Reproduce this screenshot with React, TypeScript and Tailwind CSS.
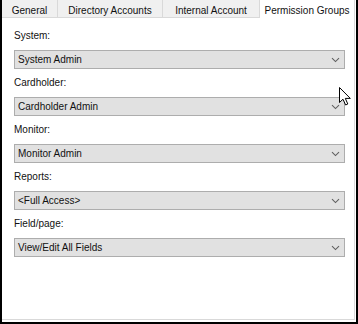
import React from 'react';

const groups = [
  { label: 'System:', value: 'System Admin' },
  { label: 'Cardholder:', value: 'Cardholder Admin' },
  { label: 'Monitor:', value: 'Monitor Admin' },
  { label: 'Reports:', value: '<Full Access>' },
  { label: 'Field/page:', value: 'View/Edit All Fields' },
];

const tabs = [
  { name: 'General', w: 'w-[56px]' },
  { name: 'Directory Accounts', w: 'w-[105px]' },
  { name: 'Internal Account', w: 'w-[97px]' },
];

const Chevron = () => (
  <svg width="9" height="6" viewBox="0 0 9 6" className="text-[#606060]">
    <path d="M1 1.2 L4.5 4.6 L8 1.2" fill="none" stroke="currentColor" strokeWidth="1.1" />
  </svg>
);

const Select = ({ value }: { value: string }) => (
  <div className="h-[19px] w-[331px] flex items-center justify-between bg-[#e1e1e1] border border-[#adadad] pl-[3px] pr-[4px]">
    <span className="leading-none">{value}</span>
    <Chevron />
  </div>
);

const Cursor = () => (
  <svg width="13" height="19" viewBox="0 0 13 19" className="absolute left-[337px] top-[87px]">
    <path
      d="M0.5 0.5 L0.5 15.5 L4 12.2 L6.6 18 L8.8 17 L6.3 11.4 L11.3 11.4 Z"
      fill="#ffffff"
      stroke="#000000"
      strokeWidth="1"
      strokeLinejoin="round"
    />
  </svg>
);

const App = () => {
  return (
    <div
      className="relative w-[358px] h-[324px] bg-white border-l-2 border-r-2 border-b-2 border-black flex flex-col text-[10px] text-[#111]"
      style={{ fontFamily: '"Liberation Sans", Arial, sans-serif' }}
    >
      <div className="flex h-[18px] shrink-0">
        {tabs.map((t) => (
          <div
            key={t.name}
            className={`${t.w} h-[18px] mt-0 bg-[#f0f0f0] border-r border-b border-[#d9d9d9] flex items-center justify-center pt-[3px]`}
          >
            {t.name}
          </div>
        ))}
        <div className="flex-1 h-[18px] bg-white flex items-start justify-center pt-[3px] border-r border-[#d9d9d9]">
          Permission Groups
        </div>
        <div className="w-[1px]" />
      </div>
      <div className="flex-1 border-r border-b border-[#d9d9d9] mr-[1px] mb-[2px] pl-[12px] pt-[11px] flex flex-col">
        {groups.map((g) => (
          <div key={g.label} className="flex flex-col mb-[7px]">
            <div className="h-[13px] leading-[13px] mb-[8px]">{g.label}</div>
            <Select value={g.value} />
          </div>
        ))}
      </div>
      <Cursor />
    </div>
  );
};

export default App;
